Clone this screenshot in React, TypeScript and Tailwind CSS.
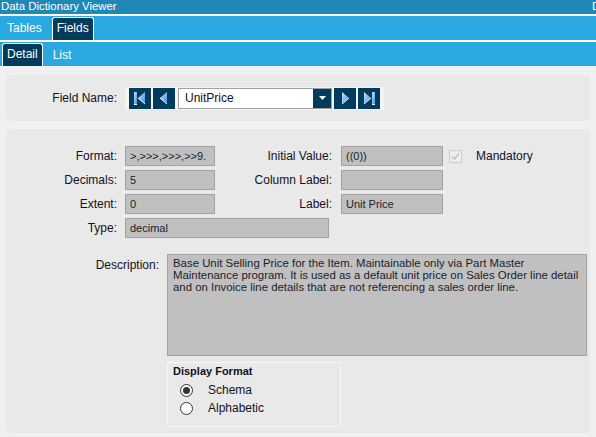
import React from 'react';

const NavButton = ({ kind }: { kind: 'first' | 'prev' | 'next' | 'last' }) => (
    <button className="w-[22px] h-[21px] bg-[#033b5d] flex items-center justify-center">
        <svg width="16" height="16" viewBox="0 0 16 16">
            <defs>
                <linearGradient id={`g-${kind}`} x1="0" y1="0" x2="1" y2="1">
                    <stop offset="0" stopColor="#c8e4ff" />
                    <stop offset="1" stopColor="#3b8fe6" />
                </linearGradient>
            </defs>
            {kind === 'first' && (
                <>
                    <rect x="2" y="2" width="3" height="12" fill={`url(#g-${kind})`} />
                    <line x1="2" y1="14.5" x2="5" y2="14.5" stroke="#ffffff" />
                    <path d="M13 2 L6 8 L13 14 Z" fill={`url(#g-${kind})`} />
                    <path d="M6 8 L13 14" stroke="#ffffff" strokeWidth="1" />
                </>
            )}
            {kind === 'prev' && (
                <>
                    <path d="M11 2 L4 8 L11 14 Z" fill={`url(#g-${kind})`} />
                    <path d="M4 8 L11 14" stroke="#ffffff" strokeWidth="1" />
                </>
            )}
            {kind === 'next' && (
                <>
                    <path d="M5 2 L12 8 L5 14 Z" fill={`url(#g-${kind})`} />
                    <path d="M12 8 L5 14" stroke="#ffffff" strokeWidth="1" />
                </>
            )}
            {kind === 'last' && (
                <>
                    <path d="M3 2 L10 8 L3 14 Z" fill={`url(#g-${kind})`} />
                    <path d="M10 8 L3 14" stroke="#ffffff" strokeWidth="1" />
                    <rect x="11" y="2" width="3" height="12" fill={`url(#g-${kind})`} />
                    <line x1="11" y1="14.5" x2="14" y2="14.5" stroke="#ffffff" />
                </>
            )}
        </svg>
    </button>
);

const Box = ({ value, w }: { value: string; w: string }) => (
    <div className={`${w} h-[20px] bg-[#c0c0c0] border border-[#a3a3a3] px-[4px] text-[11px] leading-[18px] text-[#1c1c2c]`}>
        {value}
    </div>
);

const Label = ({ children, w }: { children: React.ReactNode; w: string }) => (
    <div className={`${w} text-right text-[12px] leading-[20px] text-[#111122] shrink-0`}>{children}</div>
);

export default function App() {
    return (
        <div className="w-[596px] h-[437px] overflow-hidden bg-[#f0f0f2] flex flex-col" style={{ fontFamily: '"Liberation Sans", Arial, sans-serif' }}>
            {/* Title bar */}
            <div className="h-[14px] bg-[#1f88b7] flex justify-between text-white text-[11.4px] leading-[12px] pl-[1px]">
                <span>Data Dictionary Viewer</span>
                <span className="w-[4px] overflow-hidden">D</span>
            </div>
            <div className="h-[2px] bg-white" />

            {/* Main tabs */}
            <div className="h-[24px] bg-[#29a9e0] flex items-end gap-[10px] pl-[7px]">
                <span className="text-white text-[12px] leading-[22px] pb-[1px]">Tables</span>
                <div className="h-[23px] px-[4px] bg-[#033b5d] border border-b-0 border-white rounded-t-[3px] text-white text-[12px] leading-[20px]">
                    Fields
                </div>
            </div>
            <div className="h-[2px] bg-white" />

            {/* Sub tabs */}
            <div className="h-[24px] bg-[#29a9e0] flex items-end gap-[10px] pl-[2px]">
                <div className="h-[23px] px-[4px] bg-[#033b5d] border border-b-0 border-white rounded-t-[3px] text-white text-[12px] leading-[20px]">
                    Detail
                </div>
                <span className="text-white text-[12px] leading-[20px] pb-[1px]">List</span>
            </div>

            {/* Field name panel */}
            <div className="mx-[6px] mt-[9px] h-[46px] bg-[#e9e9e9] rounded-[4px] flex items-center">
                <Label w="w-[111px]">Field Name:</Label>
                <div className="ml-[8px] h-[23px] bg-[#f4f4f4] flex items-center gap-[2px] px-[4px]">
                    <NavButton kind="first" />
                    <NavButton kind="prev" />
                    <div className="ml-[1px] w-[154px] h-[21px] border border-[#a0a0a0] bg-white flex">
                        <span className="flex-1 pl-[6px] text-[12px] leading-[19px] text-[#111122]">UnitPrice</span>
                        <div className="w-[18px] h-full bg-[#033b5d] flex items-center justify-center">
                            <svg width="7" height="4" viewBox="0 0 7 4">
                                <path d="M0 0 L7 0 L3.5 4 Z" fill="#ffffff" />
                            </svg>
                        </div>
                    </div>
                    <NavButton kind="next" />
                    <NavButton kind="last" />
                </div>
            </div>

            {/* Detail panel */}
            <div className="mx-[6px] mt-[8px] h-[304px] bg-[#e9e9e9] rounded-[4px] pt-[17px] flex flex-col">
                <div className="flex flex-col gap-[4px]">
                    <div className="flex items-center">
                        <Label w="w-[111px]">Format:</Label>
                        <div className="ml-[8px]"><Box value=">,>>>,>>>,>>9." w="w-[90px]" /></div>
                        <Label w="w-[117px]">Initial Value:</Label>
                        <div className="ml-[9px]"><Box value="((0))" w="w-[102px]" /></div>
                        <div className="ml-[6px] w-[13px] h-[13px] border border-[#cdcdcd] bg-[#eeeeee] flex items-center justify-center">
                            <svg width="11" height="11" viewBox="0 0 11 11">
                                <path d="M2 5.5 L4.5 8 L9 2.5" fill="none" stroke="#bdbdbd" strokeWidth="1.3" />
                            </svg>
                        </div>
                        <span className="ml-[14px] text-[12px] text-[#111122]">Mandatory</span>
                    </div>
                    <div className="flex items-center">
                        <Label w="w-[111px]">Decimals:</Label>
                        <div className="ml-[8px]"><Box value="5" w="w-[90px]" /></div>
                        <Label w="w-[117px]">Column Label:</Label>
                        <div className="ml-[9px]"><Box value="" w="w-[102px]" /></div>
                    </div>
                    <div className="flex items-center">
                        <Label w="w-[111px]">Extent:</Label>
                        <div className="ml-[8px]"><Box value="0" w="w-[90px]" /></div>
                        <Label w="w-[117px]">Label:</Label>
                        <div className="ml-[9px]"><Box value="Unit Price" w="w-[102px]" /></div>
                    </div>
                    <div className="flex items-center">
                        <Label w="w-[111px]">Type:</Label>
                        <div className="ml-[8px]"><Box value="decimal" w="w-[204px]" /></div>
                    </div>
                </div>

                <div className="flex mt-[16px]">
                    <div className="w-[153px] text-right text-[12px] leading-[20px] pt-[1px] text-[#111122]">Description:</div>
                    <div className="ml-[8px] w-[420px] h-[102px] bg-[#c0c0c0] border border-[#a3a3a3] pl-[5px] pr-[3px] pt-[2px] text-[11.4px] leading-[12px] text-[#1c1c2c]">
                        Base Unit Selling Price for the Item. Maintainable only via Part Master Maintenance program. It is used as a default unit price on Sales Order line detail and on Invoice line details that are not referencing a sales order line.
                    </div>
                </div>

                <div className="ml-[161px] mt-[6px] w-[174px] h-[65px] border border-[#f8f8f8] rounded-[2px] px-[5px] pt-[1px]">
                    <div className="text-[11px] font-bold leading-[14px] text-[#111122]">Display Format</div>
                    <div className="flex items-center h-[18px] mt-[3px] pl-[7px]">
                        <div className="w-[13px] h-[13px] rounded-full border border-[#333333] bg-white flex items-center justify-center">
                            <div className="w-[7px] h-[7px] rounded-full bg-[#333333]" />
                        </div>
                        <span className="ml-[15px] text-[12px] text-[#111122]">Schema</span>
                    </div>
                    <div className="flex items-center h-[18px] pl-[7px]">
                        <div className="w-[13px] h-[13px] rounded-full border border-[#333333] bg-white" />
                        <span className="ml-[15px] text-[12px] text-[#111122]">Alphabetic</span>
                    </div>
                </div>
            </div>
        </div>
    );
}
